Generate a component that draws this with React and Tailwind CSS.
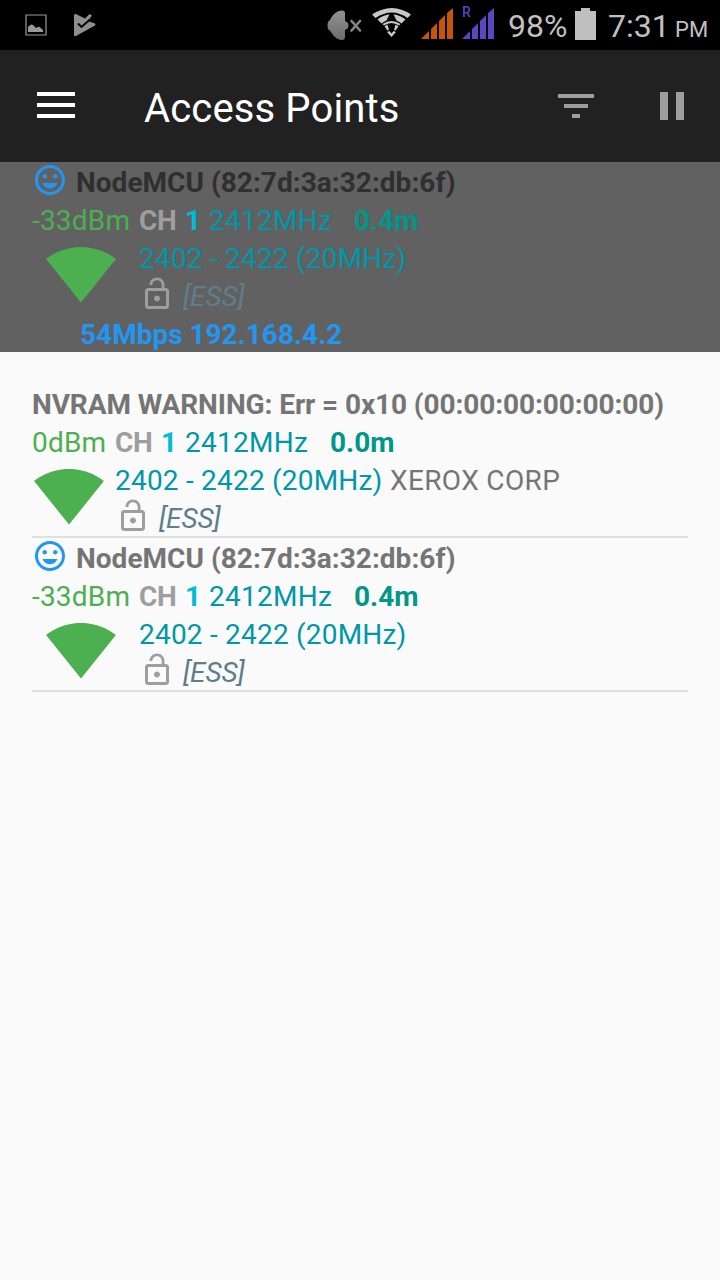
const Smile = () => (
  <svg viewBox="0 0 24 24" className="h-9 w-9 shrink-0 fill-[#2196f3]">
    <path d="M11.990 2C6.470 2 2 6.480 2 12s4.470 10 9.990 10C17.520 22 22 17.520 22 12S17.520 2 11.990 2zM12 20c-4.420 0-8-3.580-8-8s3.580-8 8-8 8 3.580 8 8-3.580 8-8 8zm3.500-9c.83 0 1.500-.67 1.500-1.500S16.330 8 15.500 8 14 8.670 14 9.500s.67 1.500 1.500 1.500zm-7 0c.83 0 1.500-.67 1.500-1.500S9.330 8 8.500 8 7 8.670 7 9.500 7.670 11 8.500 11zM7 14c.7 2 2.600 3.500 5 3.500s4.300-1.500 5-3.500z" />
  </svg>
);

const LockOpen = () => (
  <svg viewBox="0 0 24 24" className="h-9 w-9 shrink-0 fill-[#9e9e9e]">
    <path d="M12 17c1.100 0 2-.9 2-2s-.9-2-2-2-2 .9-2 2 .9 2 2 2zm6-9h-1V6c0-2.760-2.240-5-5-5S7 3.240 7 6h1.900c0-1.710 1.390-3.100 3.100-3.100 1.710 0 3.100 1.390 3.100 3.100v2H6c-1.100 0-2 .9-2 2v10c0 1.100.9 2 2 2h12c1.100 0 2-.9 2-2V10c0-1.100-.9-2-2-2zm0 12H6V10h12v10z" />
  </svg>
);

const Signal = () => (
  <svg viewBox="0 0 24 24" className="h-[72px] w-[72px] shrink-0 fill-[#4caf50]">
    <path d="M12.010 21.490L23.640 7c-.45-.34-4.930-4-11.640-4C5.280 3 .81 6.660.36 7l11.630 14.490.01.01.01-.01z" />
  </svg>
);

function AccessPoint({ name, level, distance, vendor, known, dark, link }) {
  return (
    <section className={dark ? "bg-[#616161] px-8" : "mx-8 border-b-2 border-[#e0e0e0]"}>
      <div className="flex h-[38px] gap-2 pt-0">
        {known && <Smile />}
        <b className={(dark ? "text-[#2f2f2f] " : "text-[#757575] ") + (known ? "pt-[3px] tracking-[0.03px]" : "pt-[3px] tracking-[-0.09px]")}>{name}</b>
      </div>
      <div className="flex h-[38px] pt-[3px]">
        <span className={known ? "w-[107px] tracking-[0.2px] text-[#4caf50]" : "w-[83px] tracking-[0.2px] text-[#4caf50]"}>{level}</span>
        <b className="w-[46px] tracking-[-0.2px] text-[#9e9e9e]">CH</b>
        <b className="w-6 text-[#00bcd4]">1</b>
        <span className="w-[145px] tracking-[0.26px] text-[#0097a7]">2412MHz</span>
        <b className="text-[#009688]">{distance}</b>
      </div>
      <div className="flex h-[76px]">
        <div className={known ? "w-[107px] pl-[13px]" : "w-[83px] pl-px"}>
          <Signal />
        </div>
        <div>
          <div className="flex h-[38px] pt-[3px]">
            <span className="w-[275px] tracking-[0.21px] text-[#0097a7]">2402 - 2422 (20MHz)</span>
            {vendor && <span className="tracking-[0.36px] text-[#757575]">{vendor}</span>}
          </div>
          <div className="flex h-[38px] gap-2">
            <LockOpen />
            <i className="pt-[3px] tracking-[-0.1px] text-[#607d8b]">[ESS]</i>
          </div>
        </div>
      </div>
      {link && <div className="h-[38px] pt-[3px] pl-12 font-bold text-[#2196f3]">{link}</div>}
    </section>
  );
}

const Cell = ({ className }) => (
  <svg viewBox="0 0 32 32" className={className}>
    <path d="M0 31 8 23V31zM10 21 16 15V31H10zM18 13 24 7V31H18zM26 5 32 0V31H26z" />
  </svg>
);

function StatusBar() {
  return (
    <header className="flex h-[50px] items-start bg-black text-[#c0c0c0]">
      <svg viewBox="0 0 22 22" className="mt-[14px] ml-[25px] h-[22px] w-[22px] fill-[#999]">
        <path d="M1 1h20v20H1z" fill="none" stroke="#999" strokeWidth="1.200" />
        <path d="M3 18V13L6 10.500 8 11 11 14 14 12.500 18 16V18z" />
      </svg>
      <svg viewBox="0 0 22 22" className="mt-[14px] ml-[27px] h-[22px] w-[22px] fill-[#8e8e8e]">
        <path d="M0 1Q0 0 2 0L11 4.500 15.500 0 18 1.500 14 7 21 9.500Q22 10.500 21 11.500L2 22H0z" />
        <path d="M4 9.500 7.500 13 16 5.500" fill="none" stroke="#000" strokeWidth="2" />
      </svg>
      <svg viewBox="0 0 36 32" className="mt-[9px] ml-[231px] h-8 w-9">
        <defs>
          <linearGradient id="speaker" x1="0" y1="0" x2="0" y2="1">
            <stop offset="0" stopColor="#929292" />
            <stop offset="1" stopColor="#6c6c6c" />
          </linearGradient>
        </defs>
        <path d="M3 11C6 5 10 1.500 15 1.500Q18 1.500 18 4V12Q21.500 13 21.500 16.500T18 21V28Q18 31 15 31C10 31 6 27 3 21.500Q.5 21 .5 16.500T3 11z" fill="url(#speaker)" />
        <path d="M24.500 12 33 21.500M33 12 24.500 21.500" stroke="#858585" strokeWidth="2.600" strokeLinecap="round" />
      </svg>
      <svg viewBox="0 0 40 30" className="mt-[7px] ml-[9px] h-[30px] w-10" fill="#c8c8c8">
        <path d="M0 7.500Q20-5.500 39 7.500L35.500 11Q20 0 3.500 11z" />
        <path d="M5.500 12.500Q11 8 17.500 7.200L14.500 13.500Q12 14.500 9.500 16.500zM21.500 7.200Q28 8 33.500 12.500L29.500 16.500Q27 14.500 24.500 13.500z" />
        <path d="M10.500 17Q19.500 11 28.500 17L27 18.500Q19.500 13.500 12 18.500z" />
        <path d="M12.500 19.500 15.500 17.500 17 23 15.500 23.500zM23.500 17.500 26.500 19.500 23.500 23.500 22 23zM15 25 17.500 24 19.500 26.500 21.500 24 24 25 19.500 30z" />
      </svg>
      <Cell className="mt-2 ml-[9px] h-8 w-8 fill-[#c35608]" />
      <div className="relative ml-[9px] h-10 w-8">
        <Cell className="mt-2 h-8 w-8 fill-[#5b45c0]" />
        <span className="absolute top-1 left-0 text-[14px] leading-[16px] font-medium text-[#5b45c0]">R</span>
      </div>
      <span className="mt-[7px] ml-[14px] w-[67px] text-[32px] leading-[38px] whitespace-nowrap">98%</span>
      <svg viewBox="0 0 21 32" className="mt-2 h-8 w-[21px] fill-[#c0c0c0]">
        <path d="M6 0H15V3H21V32H0V3H6z" />
      </svg>
      <span className="mt-[7px] ml-3 w-[67px] text-[32px] leading-[38px] whitespace-nowrap">7:31</span>
      <span className="mt-4 text-[22px] leading-[28px]">PM</span>
    </header>
  );
}

export default function App() {
  return (
    <div className="min-h-[1280px] w-[720px] overflow-hidden bg-[#fafafa] font-['Roboto',sans-serif] text-[28px] leading-[35px] whitespace-nowrap">
      <StatusBar />
      <nav className="flex h-28 items-start bg-[#212121]">
        <div className="mt-[42px] ml-[37px] flex w-[38px] flex-col gap-[7px]">
          <div className="h-1 bg-white" />
          <div className="h-1 bg-white" />
          <div className="h-1 bg-white" />
        </div>
        <h1 className="mt-[35px] ml-[69px] w-[414px] text-[40px] leading-[48px] tracking-[0.14px] text-white">Access Points</h1>
        <div className="mt-11 flex w-9 flex-col items-center gap-[6px]">
          <div className="h-1 w-9 bg-[#9e9e9e]" />
          <div className="h-1 w-6 bg-[#9e9e9e]" />
          <div className="h-1 w-2 bg-[#9e9e9e]" />
        </div>
        <div className="mt-[42px] ml-[66px] flex gap-2">
          <div className="h-7 w-2 bg-[#9e9e9e]" />
          <div className="h-7 w-2 bg-[#9e9e9e]" />
        </div>
      </nav>
      <AccessPoint dark known name="NodeMCU (82:7d:3a:32:db:6f)" level="-33dBm" distance="0.4m" link="54Mbps 192.168.4.2" />
      <main className="pt-8">
        <AccessPoint name="NVRAM WARNING: Err = 0x10 (00:00:00:00:00:00)" level="0dBm" distance="0.0m" vendor="XEROX CORP" />
        <AccessPoint known name="NodeMCU (82:7d:3a:32:db:6f)" level="-33dBm" distance="0.4m" />
      </main>
    </div>
  );
}
